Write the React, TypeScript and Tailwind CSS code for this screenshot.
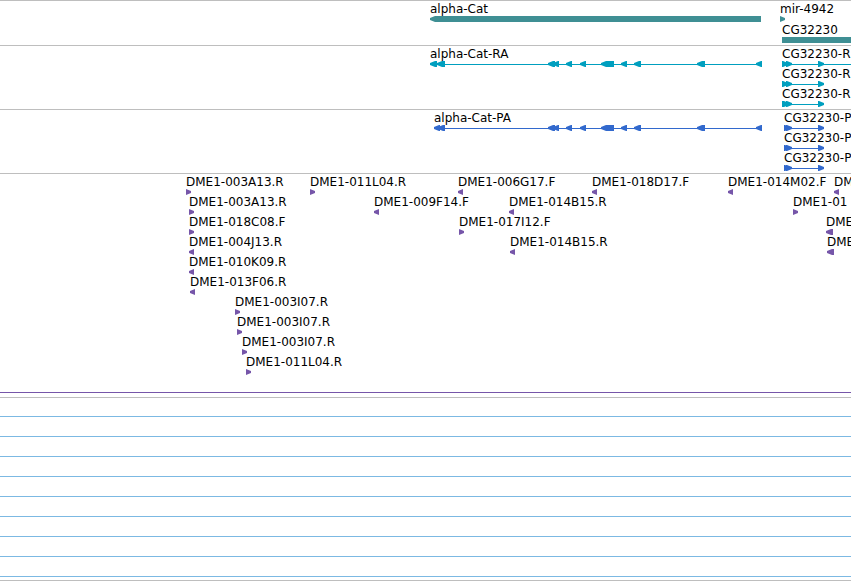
type Part = [start: number, end: number];

interface Feature {
  label: string;
  x: number;
  color: string;
  dir: "left" | "right";
  parts: Part[];
  line?: Part;
}

const TEAL = "#3f8f94";
const CYAN = "#009fbf";
const BLUE = "#3269cd";
const PURPLE = "#7656a9";

const catExons: Part[] = [
  [548, 555],
  [553, 559],
  [566, 572],
  [580, 586],
  [601, 614],
  [621, 627],
  [634, 641],
  [697, 705],
  [756, 762],
];

const read = (label: string, x: number, dir: "left" | "right", width = 5): Feature => ({
  label,
  x,
  color: PURPLE,
  dir,
  parts: [[x, x + width]],
});

const transcript = (label: string, x: number, color: string, lineEnd: number, parts: Part[]): Feature => ({
  label,
  x,
  color,
  dir: "right",
  parts,
  line: [x, lineEnd],
});

const geneRows: Feature[][] = [
  [
    { label: "alpha-Cat", x: 430, color: TEAL, dir: "left", parts: [[430, 761]] },
    { label: "mir-4942", x: 780, color: TEAL, dir: "right", parts: [[780, 785]] },
  ],
  [{ label: "CG32230", x: 782, color: TEAL, dir: "right", parts: [[782, 1200]] }],
];

const mrnaRows: Feature[][] = [
  [
    {
      label: "alpha-Cat-RA",
      x: 430,
      color: CYAN,
      dir: "left",
      parts: [[430, 437], [437, 445], ...catExons],
      line: [434, 761],
    },
    transcript("CG32230-R", 782, CYAN, 1200, [[782, 788], [786, 792], [818, 824]]),
  ],
  [transcript("CG32230-R", 782, CYAN, 820, [[782, 788], [786, 792], [818, 824]])],
  [transcript("CG32230-R", 782, CYAN, 820, [[782, 789], [786, 792], [818, 824]])],
];

const cdsParts: Part[] = [
  [784, 790],
  [786, 792],
  [818, 824],
];

const cdsRows: Feature[][] = [
  [
    {
      label: "alpha-Cat-PA",
      x: 434,
      color: BLUE,
      dir: "left",
      parts: [[434, 440], [438, 445], ...catExons],
      line: [438, 761],
    },
    transcript("CG32230-P", 784, BLUE, 820, cdsParts),
  ],
  [transcript("CG32230-P", 784, BLUE, 820, cdsParts)],
  [transcript("CG32230-P", 784, BLUE, 820, cdsParts)],
];

const readRows: Feature[][] = [
  [
    read("DME1-003A13.R", 186, "right"),
    read("DME1-011L04.R", 310, "right"),
    read("DME1-006G17.F", 458, "left"),
    read("DME1-018D17.F", 592, "left"),
    read("DME1-014M02.F", 728, "left"),
    read("DME1", 834, "left"),
  ],
  [
    read("DME1-003A13.R", 189, "right"),
    read("DME1-009F14.F", 374, "left"),
    read("DME1-014B15.R", 509, "left"),
    read("DME1-01", 793, "right"),
  ],
  [
    read("DME1-018C08.F", 189, "right"),
    read("DME1-017I12.F", 459, "right"),
    read("DME1", 826, "left", 7),
  ],
  [
    read("DME1-004J13.R", 189, "left"),
    read("DME1-014B15.R", 510, "left"),
    read("DME1", 827, "left", 7),
  ],
  [read("DME1-010K09.R", 189, "left")],
  [read("DME1-013F06.R", 190, "left")],
  [read("DME1-003I07.R", 235, "right")],
  [read("DME1-003I07.R", 237, "right")],
  [read("DME1-003I07.R", 242, "right")],
  [read("DME1-011L04.R", 246, "right")],
];

// An exon is a block whose leading five pixels taper to a blunt tip.
function exonPoints([a, b]: Part, dir: "left" | "right") {
  return dir === "left"
    ? `${a},17 ${a + 5},15 ${b},15 ${b},21 ${a + 5},21 ${a},19`
    : `${b},17 ${b - 5},15 ${a},15 ${a},21 ${b - 5},21 ${b},19`;
}

function Row({ features, height = "h-5" }: { features: Feature[]; height?: string }) {
  return (
    <li className={`relative ${height}`}>
      <svg className="absolute inset-0 h-full w-full overflow-visible" aria-hidden="true">
        {features.map((f) => (
          <g key={f.x} fill={f.color}>
            {f.line && <rect x={f.line[0]} y={18} width={f.line[1] - f.line[0]} height={1} />}
            {f.parts.map((p) => (
              <polygon key={p[0]} points={exonPoints(p, f.dir)} />
            ))}
          </g>
        ))}
      </svg>
      {features.map((f) => (
        <span key={f.x} className="absolute top-0 whitespace-nowrap" style={{ left: f.x }}>
          {f.label}
        </span>
      ))}
    </li>
  );
}

function Track({ rows, name, height }: { rows: Feature[][]; name: string; height?: string }) {
  return (
    <ul aria-label={name}>
      {rows.map((features, i) => (
        <Row key={i} features={features} height={height} />
      ))}
    </ul>
  );
}

export default function App() {
  return (
    <main className="w-full overflow-hidden border-b border-[#bebebe] bg-white font-['DejaVu_Sans',sans-serif] text-xs leading-4 text-black">
      <section className="border-t border-[#bebebe] pb-0.5">
        <Track name="Genes" rows={geneRows} height="h-[21px]" />
      </section>
      <section className="border-t border-[#bebebe] pb-[3px]">
        <Track name="Transcripts" rows={mrnaRows} />
      </section>
      <section className="border-t border-[#bebebe] pb-[3px]">
        <Track name="Coding sequences" rows={cdsRows} />
      </section>
      <section className="border-t border-[#bebebe] pb-1">
        <Track name="Clone reads" rows={readRows} />
        <div className="h-[19px] border-b border-[#7656a9]" />
      </section>
      <section className="border-t border-[#bebebe] pb-[3px]">
        <div className="h-[19px] border-b border-[#7cb9e3]" />
        {Array.from({ length: 8 }, (_, i) => (
          <div key={i} className="h-5 border-b border-[#7cb9e3]" />
        ))}
      </section>
    </main>
  );
}
